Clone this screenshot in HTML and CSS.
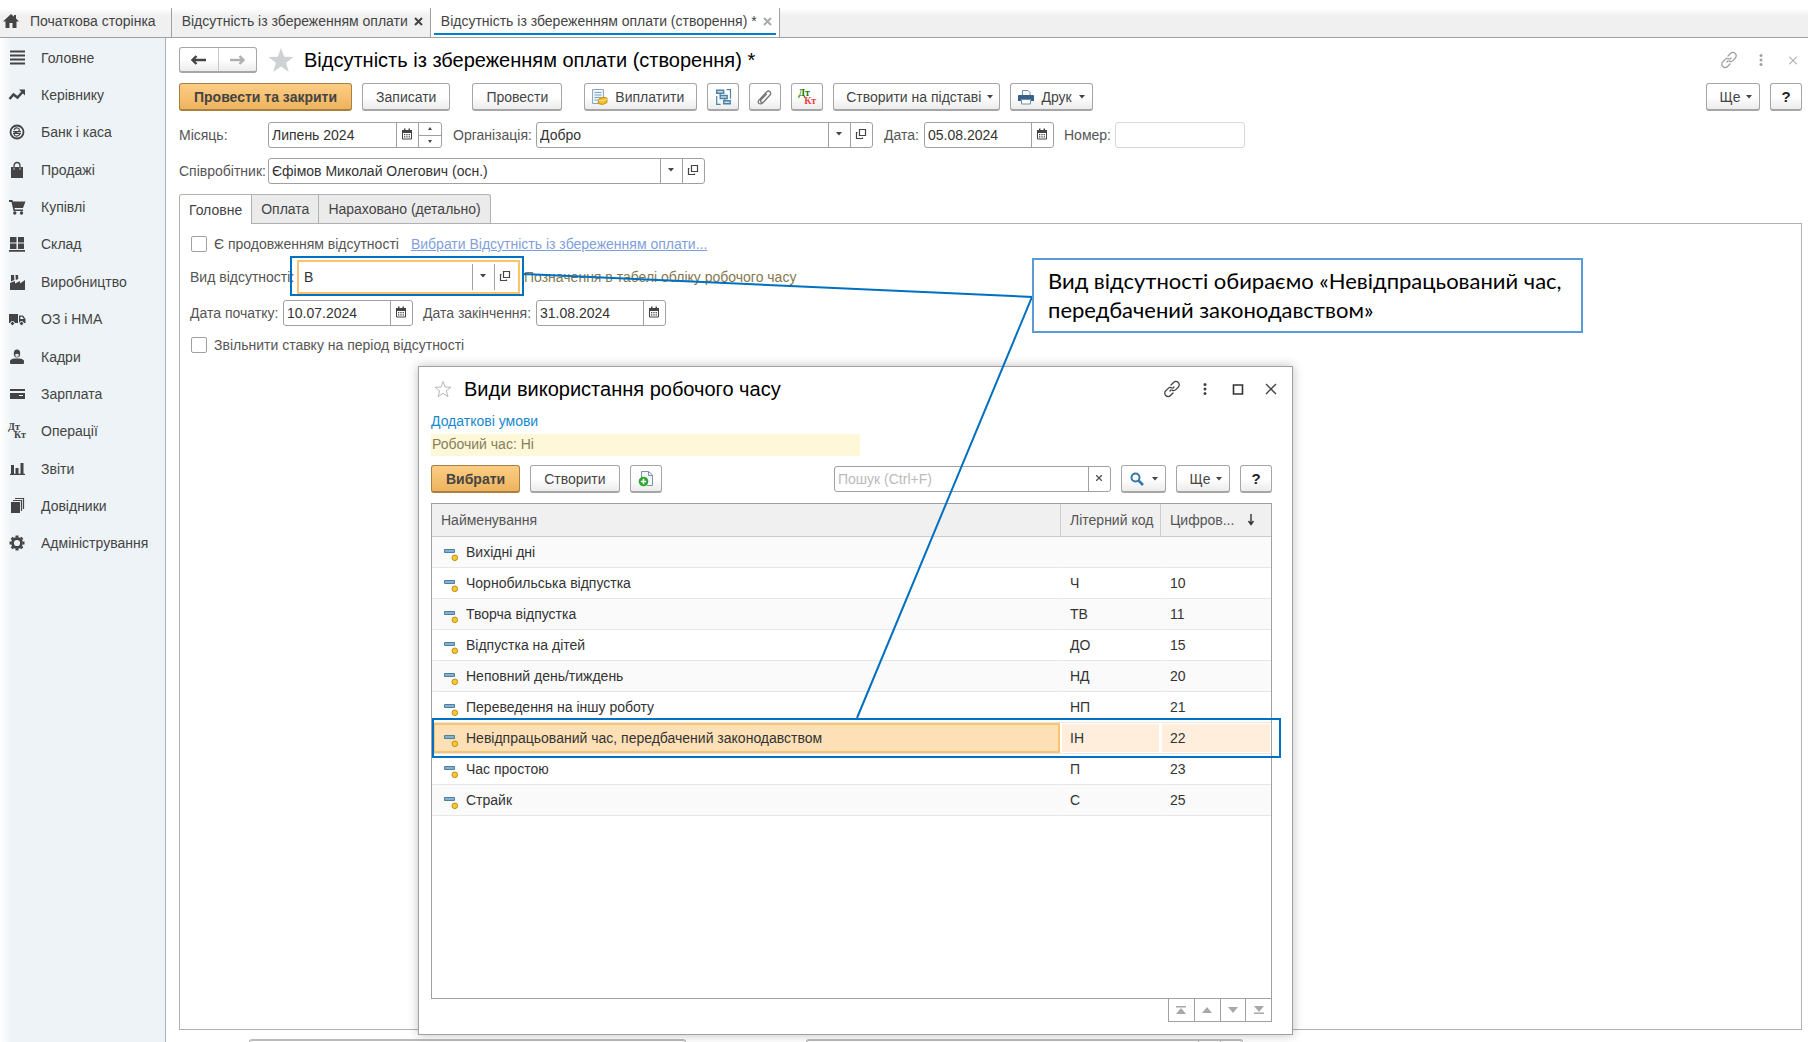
FILE: index.html
```html
<!DOCTYPE html>
<html lang="uk">
<head>
<meta charset="utf-8">
<title>Відсутність із збереженням оплати (створення)</title>
<link rel="stylesheet" href="styles.css">
</head>
<body>
<svg class="sprite" aria-hidden="true">
  <symbol id="calendar" viewBox="0 0 12 12"><path d="M1 2h10v3H1zM3 0.5h1.500v3H3zM7.500.5H9v3H7.500z" fill="#444"/><path d="M1.500 5v6h9V5" fill="none" stroke="#444"/><path d="M3 6h1.300v1.300H3zM5.300 6h1.300v1.300H5.300zM7.600 6h1.300v1.300H7.600zM3 8.300h1.300v1.300H3zM5.300 8.300h1.300v1.300H5.300zM7.600 8.300h1.300v1.300H7.600z" fill="#444"/></symbol>
  <symbol id="open" viewBox="0 0 12 12"><path d="M4.500 1.500h6v6h-6zM2.500 4.500h-1v6h6V9.500" fill="none" stroke="#444" stroke-width="1.200"/></symbol>
  <symbol id="caret" viewBox="0 0 6 4"><path d="M0 0h6L3 3.500z" fill="#444"/></symbol>
  <symbol id="link" viewBox="0 0 18 18"><g fill="none" stroke="currentColor" stroke-width="1.300" stroke-linecap="round"><path d="M8 5l2.500-2.500a3.200 3.200 0 0 1 4.700 0a3.200 3.200 0 0 1 0 4.700l-2.400 2.400a3 3 0 0 1-3.600.5M10 13l-2.500 2.500a3.200 3.200 0 0 1-4.700 0a3.200 3.200 0 0 1 0-4.700l2.400-2.400a3 3 0 0 1 3.600-.5M7 11l1-1M10 8l1-1"/></g></symbol>
  <symbol id="dots" viewBox="0 0 4 14"><g fill="currentColor"><circle cx="2" cy="2.500" r="1.500"/><circle cx="2" cy="7" r="1.500"/><circle cx="2" cy="11.500" r="1.500"/></g></symbol>
  <symbol id="cross" viewBox="0 0 12 12"><path d="M1 1l10 10M11 1L1 11" fill="none" stroke="currentColor" stroke-width="1.400"/></symbol>
  <symbol id="item" viewBox="0 0 14 14"><path d="M.5 1.500h10v3H.5z" fill="#83b1d3" stroke="#4f7f9f"/><circle cx="10.800" cy="9.800" r="2.800" fill="#f7c92c" stroke="#bd8f17"/></symbol>
</svg>

<div class="app">
  <nav class="tabbar">
    <a class="tab home" href="#"><svg width="16" height="14" viewBox="0 0 16 14"><path d="M8 0L0 7.500h2.500V14h4V9h3v5h4V7.500H16L13 4.600V1h-2v1.700z" fill="#444"/></svg>Початкова сторінка</a>
    <a class="tab" href="#">Відсутність із збереженням оплати<svg class="close" width="9" height="9"><path d="M1 1l7 7M8 1L1 8" stroke="#444" stroke-width="2"/></svg></a>
    <a class="tab active" href="#">Відсутність із збереженням оплати (створення) *<svg class="close" width="9" height="9"><path d="M1 1l7 7M8 1L1 8" stroke="#aaa" stroke-width="2"/></svg></a>
  </nav>

  <div class="body">
    <aside class="sidebar">
      <a href="#"><svg width="18" height="18"><path d="M2 2.500h15M2 6.500h15M2 10.500h15M2 14.500h15" stroke="#444" stroke-width="1.800"/></svg>Головне</a>
      <a href="#"><svg width="18" height="18"><path d="M1.500 13l4-4.500 4 3 5.500-6" fill="none" stroke="#444" stroke-width="2.500"/><path d="M11 3.500h6v6z" fill="#444"/></svg>Керівнику</a>
      <a href="#"><svg width="18" height="18"><circle cx="9" cy="9" r="6.500" fill="none" stroke="#444" stroke-width="1.800"/><path d="M6 7q1-2.500 3.500-2 2.500.7 1.500 3L6.500 10q-1 2.500 1.500 3 2.500.5 4-2M5 8.500h8M5 10.300h8" fill="none" stroke="#444" stroke-width="1.200"/></svg>Банк і каса</a>
      <a href="#"><svg width="18" height="18"><path d="M3 6h12v11H3z" fill="#444"/><path d="M6 9V5a3 3.500 0 0 1 6 0v4" fill="none" stroke="#444" stroke-width="1.300"/><path d="M6 6.500V9M12 6.500V9" stroke="#bbb"/></svg>Продажі</a>
      <a href="#"><svg width="18" height="18"><path d="M1 2h3.500l.5 1.500h12.500L15 10H6.500l.3 1.500H15V13H5.500L3.500 4H1z" fill="#444"/><circle cx="6.800" cy="15" r="1.700" fill="#444"/><circle cx="13.500" cy="15" r="1.700" fill="#444"/></svg>Купівлі</a>
      <a href="#"><svg width="18" height="18"><path d="M2 2h6.500v5.500H2zM10 2h6v5.500h-6zM2 8.500h6.500V14H2zM10 8.500h6V14h-6zM1 15h16v1.800H1z" fill="#444"/></svg>Склад</a>
      <a href="#"><svg width="18" height="18"><path d="M2 17V10l5-2v2.500L12 8v2.500L17 7v10z" fill="#444"/><path d="M3 2h3l.3 5L3 8.500zM7.500 2H10l.3 4-2.500 1z" fill="#444"/></svg>Виробництво</a>
      <a href="#"><svg width="18" height="18"><path d="M1 4h9v9H1zM11 5.500h4l2.500 3.500V13H11z" fill="#444"/><path d="M12.300 6.800h2l1.500 2.200h-3.500z" fill="#eef4f7"/><circle cx="4.500" cy="13.500" r="2" fill="#444" stroke="#eef4f7"/><circle cx="13.500" cy="13.500" r="2" fill="#444" stroke="#eef4f7"/></svg>ОЗ і НМА</a>
      <a href="#"><svg width="18" height="18"><ellipse cx="9" cy="5.500" rx="3.200" ry="4" fill="#444"/><path d="M7 6.500q2-1.500 4 0-.3 2.500-2 2.500T7 6.500z" fill="#dde3e6"/><path d="M6.500 10.500h5q4 .5 4.500 2.500v2q0 1-1 1H3q-1 0-1-1v-2q.5-2 4.500-2.500z" fill="#444"/></svg>Кадри</a>
      <a href="#"><svg width="18" height="18"><path d="M2 4h15v2H2zM2 8h15v6H2z" fill="#444"/><path d="M11 10h4v1h-4z" fill="#fff"/></svg>Зарплата</a>
      <a href="#"><span class="dtkt"><b>Дт</b><b>Кт</b></span>Операції</a>
      <a href="#"><svg width="18" height="18"><path d="M3 5h3v9H3zM7.500 8h3v6h-3zM12.500 3h3v11h-3zM2 13.700h15v1.300H2z" fill="#444"/></svg>Звіти</a>
      <a href="#"><svg width="18" height="18"><path d="M3 5h9v11H3z" fill="#444"/><path d="M5 3.500h8.500V14M7 1.500h8.500V12" fill="none" stroke="#444" stroke-width="1.200"/></svg>Довідники</a>
      <a href="#"><svg width="18" height="18"><circle cx="9" cy="9" r="4.500" fill="none" stroke="#444" stroke-width="2.800"/><g stroke="#444" stroke-width="3"><path d="M9 1.500v2M9 14.500v2M1.500 9h2M14.500 9h2M3.700 3.700l1.400 1.400M12.900 12.900l1.400 1.400M3.700 14.300l1.400-1.400M12.900 5.100l1.400-1.400"/></g></svg>Адміністрування</a>
    </aside>

    <main class="main">
      <header class="heading">
        <div class="history">
          <button aria-label="Назад"><svg width="15" height="10"><path d="M1 5h14M5.500 1L1.500 5l4 4" fill="none" stroke="#444" stroke-width="2.400"/></svg></button>
          <button aria-label="Вперед"><svg width="15" height="10"><path d="M0 5h14M9.500 1l4 4-4 4" fill="none" stroke="#b0b0b0" stroke-width="2.400"/></svg></button>
        </div>
        <svg class="star" width="26" height="24" viewBox="0 0 26 24"><path d="M13 0l3.200 8.800 9.300.2-7.400 5.700L20.800 24 13 18.500 5.200 24l2.700-9.300L.5 9l9.300-.2z" fill="#cfd1d3"/></svg>
        <h1>Відсутність із збереженням оплати (створення) *</h1>
        <div class="window-tools muted">
          <svg width="18" height="18"><use href="#link"/></svg>
          <svg width="18" height="14"><use href="#dots"/></svg>
          <svg width="18" height="9"><use href="#cross"/></svg>
        </div>
      </header>

      <div class="toolbar">
        <button class="btn primary">Провести та закрити</button>
        <button class="btn">Записати</button>
        <button class="btn apart">Провести</button>
        <button class="btn apart pay"><svg width="17" height="18"><path d="M1.500 1.500h11v14h-11z" fill="#eef5fa" stroke="#8ba8bd"/><path d="M3.500 4.500h7M3.500 7h7M3.500 9.500h7M3.500 12h4" stroke="#7fa3c0"/><path d="M8 11q4-3 8-1v4.500q-4 3.500-9 1z" fill="#f2bd2b" stroke="#c98f16"/><path d="M8 12.500q4 1.500 8-1.500" fill="none" stroke="#fbe38a"/></svg>Виплатити</button>
        <button class="btn icon" aria-label="Структура"><svg width="17" height="18"><path d="M1.700 2.200h7v3h-7zM5.200 7.500h7v3h-7zM8.700 12.700h6.500v3H8.700z" fill="#c9dded" stroke="#4d83a6" stroke-width="1.400"/><path d="M11.500 1.700h4v9M1.700 8v8.300h4M5.200 5v2.500M10 10.500v2" fill="none" stroke="#4d83a6" stroke-width="1.200"/></svg></button>
        <button class="btn icon" aria-label="Файли"><svg width="16" height="16"><path d="M3.500 9.500l6-6.500q2-1.800 3.500-.3t-.2 3.600l-6 6.500q-1.500 1.500-2.800.3-1-1.200.3-2.600l5.500-5.800M3.500 9.500l-1.700 1.800q-1.300 2 .2 3.200 1.900 1 3.800-.8l7.500-8" fill="none" stroke="#777" stroke-width="1.300"/></svg></button>
        <button class="btn icon" aria-label="Проводки"><span class="dtkt color"><b>Дт</b><b>Кт</b></span></button>
        <button class="btn menu">Створити на підставі<svg width="6" height="4"><use href="#caret"/></svg></button>
        <button class="btn print"><svg width="16" height="16"><path d="M4.500 7V1.500H10L12 3.500V7" fill="#fff" stroke="#6f8da5"/><path d="M1 6h14q1 0 1 1v5h-3v-2H3v2H0V7q0-1 1-1z" fill="#35618a"/><path d="M3.500 10.500h9V15h-9z" fill="#fff" stroke="#6f8da5"/></svg>Друк<svg width="6" height="4"><use href="#caret"/></svg></button>
        <button class="btn menu end">Ще<svg width="6" height="4"><use href="#caret"/></svg></button>
        <button class="btn icon help">?</button>
      </div>

      <div class="row">
        <label class="lead" for="month">Місяць:</label>
        <div class="field month"><input id="month" value="Липень 2024"><button aria-label="Календар"><svg width="12" height="12"><use href="#calendar"/></svg></button><span class="spin"><button aria-label="Більше"><svg width="4" height="3"><path d="M0 3h4L2 0z" fill="#444"/></svg></button><button aria-label="Менше"><svg width="4" height="3"><path d="M0 0h4L2 3z" fill="#444"/></svg></button></span></div>
        <label class="org-label" for="org">Організація:</label>
        <div class="field org"><input id="org" value="Добро"><button aria-label="Список"><svg width="6" height="4"><use href="#caret"/></svg></button><button aria-label="Відкрити"><svg width="12" height="12"><use href="#open"/></svg></button></div>
        <label class="date-label" for="date">Дата:</label>
        <div class="field date"><input id="date" value="05.08.2024"><button aria-label="Календар"><svg width="12" height="12"><use href="#calendar"/></svg></button></div>
        <label class="number-label" for="number">Номер:</label>
        <div class="field date pale"><input id="number"></div>
      </div>
      <div class="row">
        <label class="lead" for="person">Співробітник:</label>
        <div class="field person"><input id="person" value="Єфімов Миколай Олегович (осн.)"><button aria-label="Список"><svg width="6" height="4"><use href="#caret"/></svg></button><button aria-label="Відкрити"><svg width="12" height="12"><use href="#open"/></svg></button></div>
      </div>

      <div class="tabs"><button class="on">Головне</button><button>Оплата</button><button>Нараховано (детально)</button></div>
      <section class="panel">
        <div class="line"><input type="checkbox" id="cont"><label for="cont">Є продовженням відсутності</label><a class="pick" href="#">Вибрати Відсутність із збереженням оплати...</a></div>
        <div class="line kind-line"><label class="kind-label" for="kind">Вид відсутності:</label><div class="field kind"><input id="kind" value="В"><button aria-label="Список"><svg width="6" height="4"><use href="#caret"/></svg></button><button aria-label="Відкрити"><svg width="12" height="12"><use href="#open"/></svg></button></div><span class="hint">Позначення в табелі обліку робочого часу</span></div>
        <div class="line dates"><label class="from-label" for="from">Дата початку:</label><div class="field date"><input id="from" value="10.07.2024"><button aria-label="Календар"><svg width="12" height="12"><use href="#calendar"/></svg></button></div><label class="to-label" for="to">Дата закінчення:</label><div class="field date"><input id="to" value="31.08.2024"><button aria-label="Календар"><svg width="12" height="12"><use href="#calendar"/></svg></button></div></div>
        <div class="line free"><input type="checkbox" id="free"><label for="free">Звільнити ставку на період відсутності</label></div>
      </section>
      <footer class="below"><div class="field"><input aria-label="Коментар"></div><div class="field"><input aria-label="Відповідальний"><button aria-label="Список"></button><button aria-label="Відкрити"></button></div></footer>
    </main>
  </div>

  <section class="dialog" role="dialog" aria-labelledby="dialog-title">
    <header class="dialog-head">
      <svg width="18" height="18" viewBox="0 0 18 18"><path d="M9 1.500l2 5.600 6 .1-4.700 3.600 1.700 5.900L9 13.300l-5 3.400 1.700-5.900L1 7.200l6-.1z" fill="none" stroke="#b5b8ba"/></svg>
      <h2 id="dialog-title">Види використання робочого часу</h2>
      <div class="window-tools">
        <svg width="18" height="18"><use href="#link"/></svg>
        <svg width="18" height="14"><use href="#dots"/></svg>
        <svg width="18" height="11" viewBox="0 0 11 11"><path d="M1 1h9v9H1z" fill="none" stroke="#333" stroke-width="1.600"/></svg>
        <svg width="18" height="12"><use href="#cross"/></svg>
      </div>
    </header>
    <a class="more" href="#">Додаткові умови</a>
    <div class="filter">Робочий час: Ні</div>
    <div class="toolbar">
      <button class="btn primary">Вибрати</button>
      <button class="btn">Створити</button>
      <button class="btn icon" aria-label="Створити копіюванням"><svg width="16" height="17"><path d="M3.500 7V1.500h7l4 3.500v10.500H9" fill="#f4f7f9" stroke="#7d93a5"/><path d="M10.500 1.500v4h4" fill="none" stroke="#7d93a5"/><circle cx="5.500" cy="11.500" r="4.800" fill="#2aa52e"/><path d="M5.500 8.800v5.400M2.800 11.500h5.400" stroke="#fff" stroke-width="1.600"/></svg></button>
      <div class="field search end"><input placeholder="Пошук (Ctrl+F)" aria-label="Пошук"><button aria-label="Очистити"><svg width="6" height="6"><path d="M0 0l6 6M6 0L0 6" stroke="#555" stroke-width="1.300"/></svg></button></div>
      <button class="btn find" aria-label="Знайти"><svg width="14" height="14"><circle cx="5.500" cy="5.500" r="4" fill="none" stroke="#3778a8" stroke-width="2"/><path d="M8.500 8.500l4.500 4.500" stroke="#3778a8" stroke-width="2.600"/></svg><svg width="6" height="4"><use href="#caret"/></svg></button>
      <button class="btn menu">Ще<svg width="6" height="4"><use href="#caret"/></svg></button>
      <button class="btn icon help">?</button>
    </div>
    <div class="list">
      <table>
        <colgroup><col><col class="code"><col class="digit"></colgroup>
        <thead><tr><th>Найменування</th><th>Літерний код</th><th><span class="sorted">Цифров...<svg width="8" height="12"><path d="M4 0v10M1.500 7L4 10.500 6.500 7" fill="none" stroke="#333" stroke-width="1.400"/></svg></span></th></tr></thead>
        <tbody>
          <tr><td><svg width="14" height="14"><use href="#item"/></svg>Вихідні дні</td><td></td><td></td></tr>
          <tr><td><svg width="14" height="14"><use href="#item"/></svg>Чорнобильська відпустка</td><td>Ч</td><td>10</td></tr>
          <tr><td><svg width="14" height="14"><use href="#item"/></svg>Творча відпустка</td><td>ТВ</td><td>11</td></tr>
          <tr><td><svg width="14" height="14"><use href="#item"/></svg>Відпустка на дітей</td><td>ДО</td><td>15</td></tr>
          <tr><td><svg width="14" height="14"><use href="#item"/></svg>Неповний день/тиждень</td><td>НД</td><td>20</td></tr>
          <tr><td><svg width="14" height="14"><use href="#item"/></svg>Переведення на іншу роботу</td><td>НП</td><td>21</td></tr>
          <tr class="selected"><td><svg width="14" height="14"><use href="#item"/></svg>Невідпрацьований час, передбачений законодавством</td><td>ІН</td><td>22</td></tr>
          <tr><td><svg width="14" height="14"><use href="#item"/></svg>Час простою</td><td>П</td><td>23</td></tr>
          <tr><td><svg width="14" height="14"><use href="#item"/></svg>Страйк</td><td>С</td><td>25</td></tr>
        </tbody>
      </table>
    </div>
    <div class="pager">
      <button aria-label="На початок"><svg width="10" height="8"><path d="M0 0h10v1.500H0zM0 8h10L5 2z" fill="#a8a8a8"/></svg></button>
      <button aria-label="Вгору"><svg width="10" height="8"><path d="M0 7h10L5 1z" fill="#a8a8a8"/></svg></button>
      <button aria-label="Вниз"><svg width="10" height="8"><path d="M0 1h10L5 7z" fill="#a8a8a8"/></svg></button>
      <button aria-label="У кінець"><svg width="10" height="8"><path d="M0 0h10L5 6zM0 6.500h10V8H0z" fill="#a8a8a8"/></svg></button>
    </div>
  </section>

  <svg class="marks" aria-hidden="true"><g fill="none" stroke="#0070c0" stroke-width="2"><path d="M291 257h232v38H291zM433 719h847v38H433zM524 274l508 23-175 421"/></g></svg>
  <p class="note">Вид відсутності обираємо «Невідпрацьований час, передбачений законодавством»</p>
</div>
</body>
</html>
```
FILE: styles.css
```css
* { box-sizing: border-box; }
body { margin: 0; font: 14px/20px "Liberation Sans", Arial, sans-serif; color: #444; background: #fff; }
button, input { font: inherit; color: inherit; margin: 0; }
button { padding: 0; background: none; border: 0; }
a { color: inherit; text-decoration: none; }
svg { flex: none; display: block; }
h1, h2 { margin: 0; font-size: 20px; line-height: 24px; font-weight: 400; color: #000; }
.sprite { position: absolute; width: 0; height: 0; }
.app { position: relative; display: flex; flex-direction: column; height: 100vh; overflow: hidden; }

.tabbar { display: flex; flex: none; height: 38px; padding-top: 8px; border-bottom: 1px solid #a0a0a0; background: linear-gradient(#fff 8px, #f0f0f0 16px); }
.tab { display: flex; align-items: center; padding: 0 7px 3px 10px; border-right: 1px solid #a0a0a0; }
.tab.home { gap: 11px; padding-left: 3px; padding-right: 15px; }
.tab .close { margin-left: 6px; }
.tab.active { position: relative; background: #fff; }
.tab.active::after { content: ""; position: absolute; left: 3px; right: 3px; bottom: 2px; height: 2px; background: #0080cc; }

.body { display: flex; flex: 1; min-height: 0; }
.sidebar { flex: none; width: 166px; border-right: 1px solid #a8b0b4; background: linear-gradient(90deg, #fff, #edf3f6 12px); display: grid; grid-template-rows: repeat(14, 1fr); padding: 1px 0 480px; }
.sidebar a { display: flex; align-items: center; gap: 15px; padding-left: 8px; }
.dtkt { display: flex; flex-direction: column; width: 18px; flex: none; font: 10px/8px "Liberation Serif", serif; text-align: left; }
.dtkt b + b { text-align: right; }
.dtkt.color b { color: #1a7a00; }
.dtkt.color b + b { color: #f03c3c; }

.main { flex: 1; min-width: 0; display: flex; flex-direction: column; padding: 9px 6px 0 13px; }
.heading { display: flex; align-items: center; height: 26px; }
.history { display: flex; width: 78px; height: 26px; border: 1px solid #a6a6a6; border-bottom-width: 2px; border-radius: 3px; background: linear-gradient(#fff 50%, #ececec); }
.history button { flex: 1; display: flex; align-items: center; justify-content: center; }
.history button + button { border-left: 1px solid #c8c8c8; }
.star { margin: 0 10px 0 11px; }
.window-tools { display: flex; align-items: center; gap: 15px; margin-left: auto; color: #444; }
.window-tools.muted { gap: 14px; color: #a0a0a0; }

.toolbar { display: flex; gap: 10px; }
.heading + .toolbar { margin-top: 10px; }
.btn { display: flex; align-items: center; justify-content: center; height: 28px; padding: 0 13px; border: 1px solid #a6a6a6; border-bottom-width: 2px; border-radius: 3px; background: linear-gradient(#fff 50%, #ececec); white-space: nowrap; }
.primary { padding: 0 14px; font-weight: 700; border-color: #a98041; background: linear-gradient(#fdcd85, #eeb45e); }
.apart { margin-left: 12px; }
.icon { width: 32px; padding: 0; }
.pay { gap: 7px; padding: 0 12px 0 6px; }
.menu { gap: 6px; min-width: 54px; padding: 0 6px 0 12px; }
.print { gap: 7px; padding: 0 7px; }
.find { gap: 8px; padding: 0 7px 0 8px; }
.help { font-weight: 700; font-size: 15px; color: #222; }
.end { margin-left: auto; }

.row { display: flex; align-items: center; height: 26px; margin-top: 10px; color: #555; }
.toolbar + .row { margin-top: 11px; }
.field { display: flex; height: 26px; border: 1px solid #a0a0a0; border-radius: 3px; background: #fff; color: #333; }
.field input { flex: 1; min-width: 0; width: 0; padding: 0 3px; border: 0; background: none; outline: none; }
.field input::placeholder { color: #bbb; opacity: 1; }
.field > button { flex: none; display: flex; align-items: center; justify-content: center; width: 22px; padding: 0 2px 2px 0; border-left: 1px solid #a0a0a0; }
.spin { display: flex; flex-direction: column; width: 23px; border-left: 1px solid #a0a0a0; }
.spin button { flex: 1; display: flex; align-items: center; justify-content: center; }
.spin button + button { border-top: 1px solid #a0a0a0; }
.lead { width: 89px; }
.month { width: 174px; }
.org-label { width: 94px; padding-left: 11px; }
.org { width: 337px; }
.date-label { width: 51px; padding-left: 11px; }
.date { width: 130px; }
.number-label { width: 61px; padding-left: 10px; }
.pale { border-color: #d8d8d8; }
.person { width: 437px; }

.tabs { display: flex; flex: none; margin-top: 10px; height: 29px; }
.tabs button { padding: 0 9px; border: 1px solid #b0b0b0; border-bottom: 0; border-left-width: 0; background: #ebebeb; }
.tabs button:first-child { border-left-width: 1px; border-radius: 3px 0 0; }
.tabs button:last-child { border-radius: 0 3px 0 0; }
.tabs .on { position: relative; z-index: 1; margin-bottom: -1px; background: #fff; }
.panel { flex: 1; min-height: 0; border: 1px solid #b0b0b0; padding: 7px 10px; color: #555; }
.line { display: flex; align-items: center; height: 26px; }
.line input[type="checkbox"] { appearance: none; width: 16px; height: 16px; margin: 0 7px 0 1px; border: 1px solid #a0a0a0; border-radius: 2px; background: #fff; }
.pick { margin-left: 12px; color: #7f9fdc; text-decoration: underline; }
.kind-line { height: 34px; margin-top: 3px; }
.kind-label { width: 107px; white-space: nowrap; }
.kind { width: 223px; height: 34px; padding: 2px; border: 2px solid #fcc36f; border-radius: 0; }
.hint { margin-left: 4px; color: #857850; }
.dates { margin-top: 6px; }
.from-label { width: 93px; }
.to-label { width: 123px; padding-left: 10px; }
.free { margin-top: 6px; }
.below { display: flex; flex: none; gap: 120px; height: 12px; padding: 9px 0 0 70px; overflow: hidden; }
.below .field { width: 437px; border-width: 2px 1px 1px; border-color: #bbb; }

.dialog { position: absolute; left: 418px; top: 366px; width: 875px; height: 669px; display: flex; flex-direction: column; padding: 10px 20px 12px 12px; border: 1px solid #a0a0a0; background: #fff; box-shadow: 0 0 10px rgba(0, 0, 0, .25); }
.dialog-head { display: flex; align-items: center; gap: 12px; height: 24px; padding-left: 3px; }
.dialog-head .window-tools { margin-right: -8px; }
.more { margin-top: 10px; color: #1788d0; }
.filter { width: 429px; height: 22px; margin: 3px 0 9px; padding-left: 1px; background: #fff8d8; color: #85805c; }
.search { width: 277px; margin-block: 1px; margin-left: auto; }
.list { flex: 1; min-height: 0; margin-top: 10px; border: 1px solid #a0a0a0; }
table { width: 100%; border-collapse: separate; border-spacing: 0; table-layout: fixed; }
.code { width: 100px; }
.digit { width: 111px; }
th { height: 33px; padding: 0 0 0 9px; text-align: left; font-weight: 400; color: #555; background: #f0f0f0; border-bottom: 1px solid #ccc; white-space: nowrap; }
th + th { border-left: 1px solid #ccc; }
.sorted { display: flex; align-items: center; gap: 13px; }
td { height: 31px; padding: 0 0 0 9px; border-bottom: 1px solid #e6e6e6; border-left: 1px solid transparent; color: #333; white-space: nowrap; }
td svg { display: inline-block; margin: 0 8px 0 2px; vertical-align: -5px; }
tr:nth-child(odd) td { background: #fafafa; }
tbody .selected td { background: #feeedb; border-left-color: #fff; box-shadow: inset 0 0 0 1px #fff; }
tbody .selected td:first-child { background: #fde0b5; box-shadow: inset 0 0 0 2px #fcc36f; }
.pager { display: flex; align-self: flex-end; width: 104px; height: 23px; border: 1px solid #a0a0a0; border-top: 0; }
.pager button { flex: 1; display: flex; align-items: center; justify-content: center; }
.pager button + button { border-left: 1px solid #a0a0a0; }

.marks { position: absolute; inset: 0; width: 100%; height: 100%; pointer-events: none; }
.note { position: absolute; left: 1032px; top: 258px; width: 551px; height: 75px; margin: 0; padding: 6px 10px 6px 14px; border: 2px solid #5b9bd5; background: #fff; color: #000; font: 22px/29px Lato, "Noto Sans", sans-serif; }
```
